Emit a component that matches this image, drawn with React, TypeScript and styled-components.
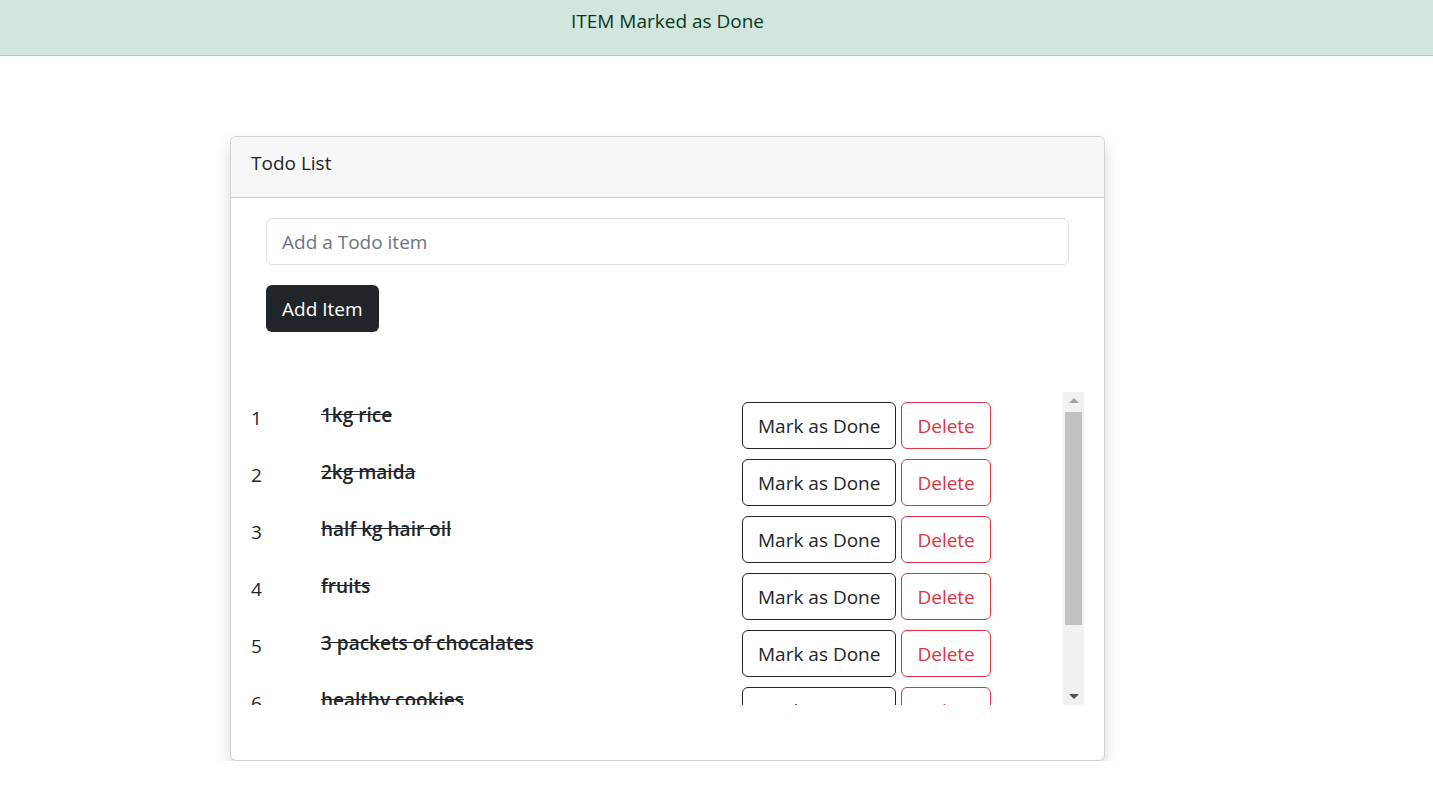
import React from "react";
import styled, { createGlobalStyle } from "styled-components";

const Global = createGlobalStyle`
  html, body { margin: 0; padding: 0; background: #fff; }
  body { font-family: "Open Sans", "Noto Sans", sans-serif; color: #212529; }
  * { box-sizing: border-box; }
`;

const Alert = styled.div`
  height: 56px;
  background: #d1e7dd;
  border-bottom: 1px solid #a3cfbb;
  color: #0a3622;
  font-size: 19px;
  line-height: 42px;
  text-align: center;
  padding-right: 98px;
`;

const Card = styled.div`
  width: 875px;
  margin: 80px 0 0 230px;
  border: 1px solid rgba(0, 0, 0, 0.175);
  border-radius: 6px;
  box-shadow: 0 8px 16px rgba(0, 0, 0, 0.15);
  background: #fff;
  overflow: hidden;
`;

const CardHeader = styled.div`
  height: 61px;
  padding: 11px 20px 0;
  background: #f7f7f7;
  border-bottom: 1px solid rgba(0, 0, 0, 0.175);
  font-size: 19px;
  line-height: 30px;
`;

const CardBody = styled.div`
  padding: 20px 20px 55px 20px;
  display: flex;
  flex-direction: column;
`;

const Form = styled.div`
  padding: 0 15px;
  display: flex;
  flex-direction: column;
  align-items: flex-start;
  gap: 20px;
`;

const Input = styled.input`
  width: 100%;
  height: 47px;
  padding: 0 15px;
  border: 1px solid #dee2e6;
  border-radius: 6px;
  font-family: inherit;
  font-size: 19px;
  color: #212529;
  outline: none;
  &::placeholder { color: #6c757d; }
`;

const DarkButton = styled.button`
  height: 47px;
  padding: 0 16px;
  border: none;
  border-radius: 6px;
  background: #212529;
  color: #fff;
  font-family: inherit;
  font-size: 19px;
`;

const ListWrap = styled.div`
  margin-top: 60px;
  height: 313px;
  display: flex;
`;

const List = styled.div`
  flex: 1;
  overflow: hidden;
  padding-top: 10px;
`;

const ScrollTrack = styled.div`
  width: 21px;
  background: #f1f1f1;
  display: flex;
  flex-direction: column;
  align-items: center;
`;

const ArrowBox = styled.div`
  height: 20px;
  width: 100%;
  display: flex;
  align-items: center;
  justify-content: center;
`;

const Arrow = styled.span<{ $dir: "up" | "down" }>`
  width: 0;
  height: 0;
  border-left: 5px solid transparent;
  border-right: 5px solid transparent;
  ${(p) =>
    p.$dir === "up"
      ? "border-bottom: 5px solid #a3a3a3; margin-top: -3px;"
      : "border-top: 5px solid #505050; margin-top: 3px;"}
`;

const Thumb = styled.div`
  width: 17px;
  height: 213px;
  background: #c1c1c1;
`;

const Spacer = styled.div`
  flex: 1;
`;

const Row = styled.div`
  display: grid;
  grid-template-columns: 70px 421px auto 1fr;
  align-items: start;
  height: 57px;
`;

const Num = styled.span`
  font-size: 19px;
  line-height: 30px;
  margin-top: 1px;
`;

const ItemText = styled.span<{ $done: boolean }>`
  font-size: 19px;
  font-weight: 600;
  line-height: 30px;
  margin-top: -2px;
  text-decoration: ${(p) => (p.$done ? "line-through" : "none")};
`;

const Actions = styled.div`
  display: flex;
  gap: 5px;
`;

const OutlineButton = styled.button<{ $variant: "dark" | "danger" }>`
  height: 47px;
  padding: 0 15px;
  border-radius: 6px;
  background: #fff;
  font-family: inherit;
  font-size: 19px;
  border: 1px solid ${(p) => (p.$variant === "danger" ? "#dc3545" : "#212529")};
  color: ${(p) => (p.$variant === "danger" ? "#dc3545" : "#212529")};
`;

const items = [
  "1kg rice",
  "2kg maida",
  "half kg hair oil",
  "fruits",
  "3 packets of chocalates",
  "healthy cookies",
  "bread",
];

export default function App() {
  return (
    <>
      <Global />
      <Alert>ITEM Marked as Done</Alert>
      <Card>
        <CardHeader>Todo List</CardHeader>
        <CardBody>
          <Form>
            <Input placeholder="Add a Todo item" />
            <DarkButton>Add Item</DarkButton>
          </Form>
          <ListWrap>
            <List>
              {items.map((t, i) => (
                <Row key={t}>
                  <Num>{i + 1}</Num>
                  <ItemText $done>{t}</ItemText>
                  <Actions>
                    <OutlineButton $variant="dark">Mark as Done</OutlineButton>
                    <OutlineButton $variant="danger">Delete</OutlineButton>
                  </Actions>
                </Row>
              ))}
            </List>
            <ScrollTrack>
              <ArrowBox>
                <Arrow $dir="up" />
              </ArrowBox>
              <Thumb />
              <Spacer />
              <ArrowBox>
                <Arrow $dir="down" />
              </ArrowBox>
            </ScrollTrack>
          </ListWrap>
        </CardBody>
      </Card>
    </>
  );
}
